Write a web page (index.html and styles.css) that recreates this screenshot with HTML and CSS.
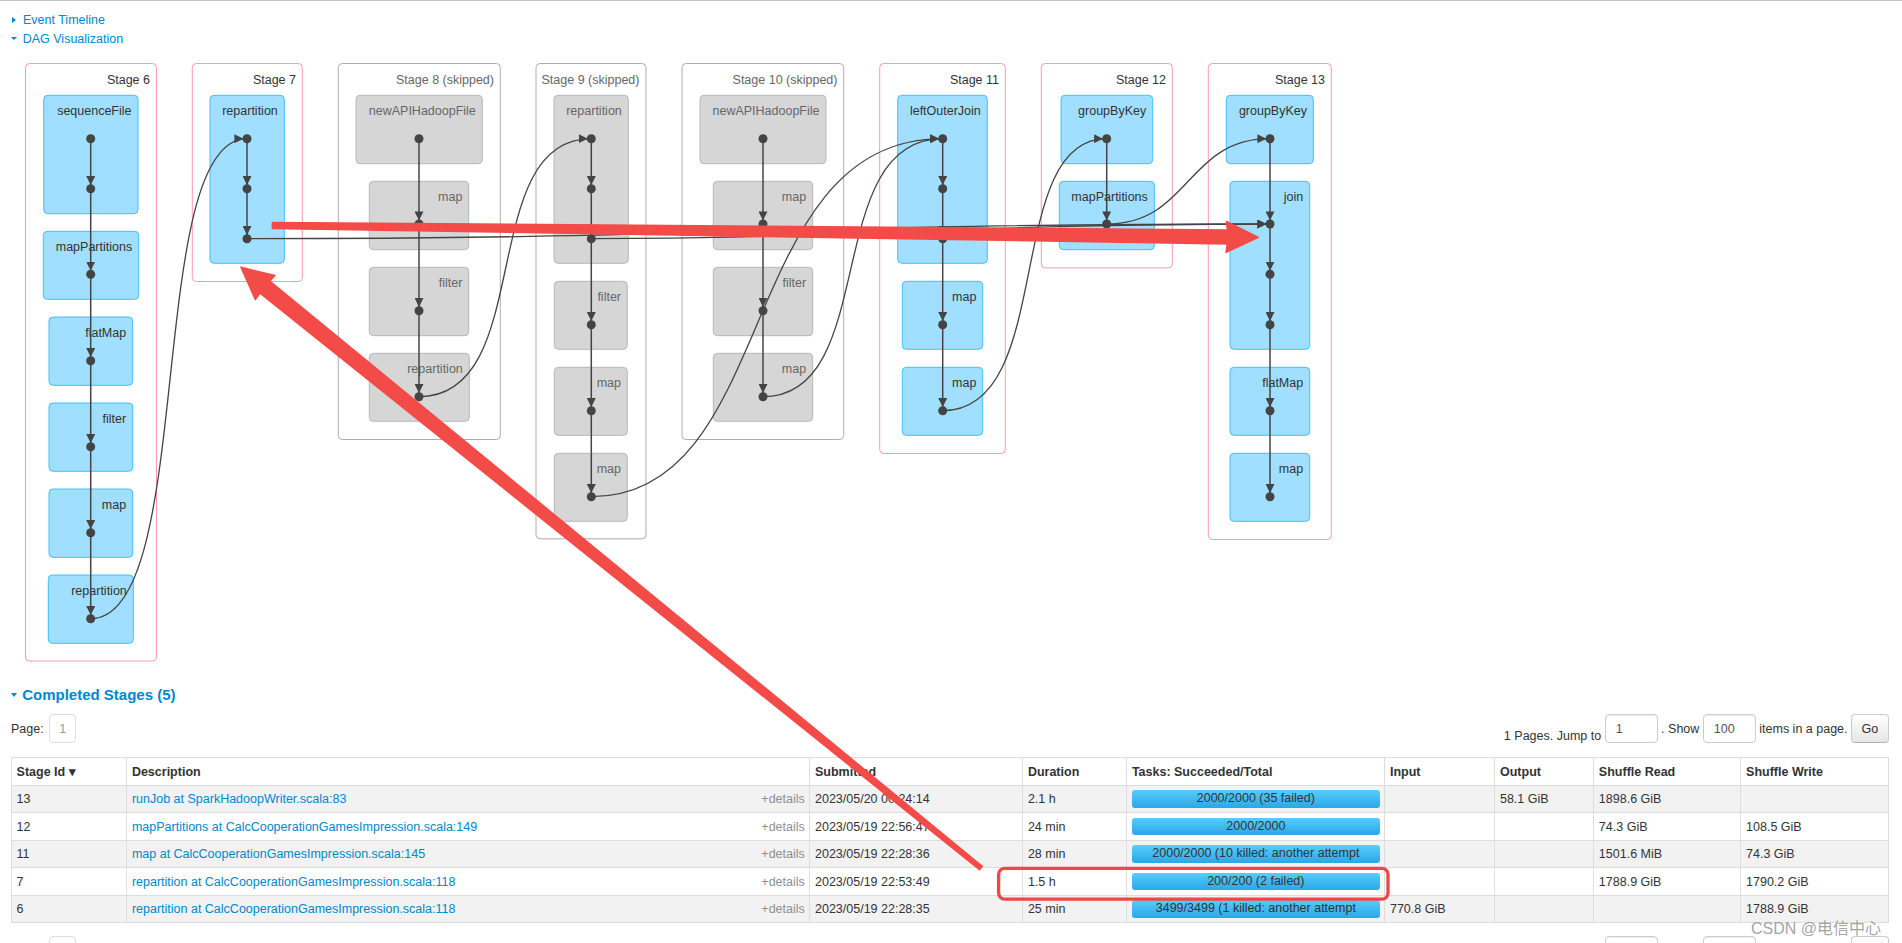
FILE: index.html
```html
<!DOCTYPE html>
<html lang="en">

<head>
    <meta charset="UTF-8">
    <title>Spark Jobs - Job Details</title>
    <link rel="stylesheet" href="styles.css">
</head>

<body>
    <div class="top-rule"></div>

    <!-- Collapsible sections -->
    <div class="toggles">
        <div class="toggle"><span class="arrow-closed"></span>Event Timeline</div>
        <div class="toggle"><span class="arrow-open"></span>DAG Visualization</div>
    </div>

    <!-- DAG -->
    <svg class="dag" width="1902" height="630" viewBox="0 50 1902 630">
        <defs>
            <marker id="arrow" viewBox="0 0 10 10" refX="14" refY="5" markerWidth="9" markerHeight="9"
                markerUnits="userSpaceOnUse" orient="auto">
                <path d="M0 0 L10 5 L0 10 Z"></path>
            </marker>
        </defs>

        <g class="stage">
            <rect x="25.5" y="63.5" width="131" height="597.5" rx="4"></rect>
            <text x="150" y="83.8">Stage 6</text>
            <g class="op"><rect x="43.7" y="95.3" width="94.3" height="118.4" rx="4"></rect><text x="131.5" y="115.3">sequenceFile</text></g>
            <g class="op"><rect x="43.3" y="231.3" width="95.4" height="68" rx="4"></rect><text x="132.2" y="251.3">mapPartitions</text></g>
            <g class="op"><rect x="49" y="317" width="83.7" height="68.3" rx="4"></rect><text x="126.2" y="337">flatMap</text></g>
            <g class="op"><rect x="49" y="403" width="83.7" height="68.3" rx="4"></rect><text x="126.2" y="423">filter</text></g>
            <g class="op"><rect x="49" y="489" width="83.7" height="68.3" rx="4"></rect><text x="126.2" y="509">map</text></g>
            <g class="op"><rect x="48.3" y="575" width="85" height="68.3" rx="4"></rect><text x="126.8" y="595">repartition</text></g>
        </g>

        <g class="stage">
            <rect x="192.3" y="63.5" width="110" height="218" rx="4"></rect>
            <text x="296" y="83.8">Stage 7</text>
            <g class="op"><rect x="210" y="95.3" width="74.3" height="168" rx="4"></rect><text x="277.8" y="115.3">repartition</text></g>
        </g>

        <g class="stage skipped">
            <rect x="338.3" y="63.5" width="162" height="376" rx="4"></rect>
            <text x="494" y="83.8">Stage 8 (skipped)</text>
            <g class="op"><rect x="356" y="95.3" width="126.3" height="68.4" rx="4"></rect><text x="475.8" y="115.3">newAPIHadoopFile</text></g>
            <g class="op"><rect x="369.3" y="181.3" width="99.4" height="68.4" rx="4"></rect><text x="462.4" y="201.3">map</text></g>
            <g class="op"><rect x="369.3" y="267.3" width="99.4" height="68.4" rx="4"></rect><text x="462.4" y="287.3">filter</text></g>
            <g class="op"><rect x="369.3" y="353.3" width="100" height="68" rx="4"></rect><text x="462.8" y="373.3">repartition</text></g>
        </g>

        <g class="stage skipped">
            <rect x="536" y="63.5" width="110" height="475.3" rx="4"></rect>
            <text x="639.5" y="83.8">Stage 9 (skipped)</text>
            <g class="op"><rect x="554" y="95.3" width="74.3" height="168" rx="4"></rect><text x="621.8" y="115.3">repartition</text></g>
            <g class="op"><rect x="554.3" y="281.3" width="73" height="68" rx="4"></rect><text x="621" y="301.3">filter</text></g>
            <g class="op"><rect x="554.3" y="367.3" width="73" height="68" rx="4"></rect><text x="621" y="387.3">map</text></g>
            <g class="op"><rect x="554.3" y="453.3" width="73" height="68" rx="4"></rect><text x="621" y="473.3">map</text></g>
        </g>

        <g class="stage skipped">
            <rect x="682" y="63.5" width="161.7" height="376" rx="4"></rect>
            <text x="837.5" y="83.8">Stage 10 (skipped)</text>
            <g class="op"><rect x="700" y="95.3" width="126" height="68.4" rx="4"></rect><text x="819.5" y="115.3">newAPIHadoopFile</text></g>
            <g class="op"><rect x="713.3" y="181.3" width="99.4" height="68.4" rx="4"></rect><text x="806.2" y="201.3">map</text></g>
            <g class="op"><rect x="713.3" y="267.3" width="99.4" height="68.4" rx="4"></rect><text x="806.2" y="287.3">filter</text></g>
            <g class="op"><rect x="713.3" y="353.3" width="99.4" height="68" rx="4"></rect><text x="806.2" y="373.3">map</text></g>
        </g>

        <g class="stage">
            <rect x="879.7" y="63.5" width="125.6" height="390" rx="4"></rect>
            <text x="999" y="83.8">Stage 11</text>
            <g class="op"><rect x="897.7" y="95.3" width="89.6" height="168" rx="4"></rect><text x="980.8" y="115.3">leftOuterJoin</text></g>
            <g class="op"><rect x="902.3" y="281.3" width="80.4" height="68" rx="4"></rect><text x="976.4" y="301.3">map</text></g>
            <g class="op"><rect x="902.3" y="367.3" width="80.4" height="68" rx="4"></rect><text x="976.4" y="387.3">map</text></g>
        </g>

        <g class="stage">
            <rect x="1041.3" y="63.5" width="131" height="204.4" rx="4"></rect>
            <text x="1166" y="83.8">Stage 12</text>
            <g class="op"><rect x="1061" y="95.3" width="91.7" height="68.4" rx="4"></rect><text x="1146.2" y="115.3">groupByKey</text></g>
            <g class="op"><rect x="1059.3" y="181.3" width="95" height="68.4" rx="4"></rect><text x="1147.8" y="201.3">mapPartitions</text></g>
        </g>

        <g class="stage">
            <rect x="1208.3" y="63.5" width="123" height="476" rx="4"></rect>
            <text x="1325" y="83.8">Stage 13</text>
            <g class="op"><rect x="1226.3" y="95.3" width="87" height="68.4" rx="4"></rect><text x="1307" y="115.3">groupByKey</text></g>
            <g class="op"><rect x="1230" y="181.3" width="79.7" height="168" rx="4"></rect><text x="1303.2" y="201.3">join</text></g>
            <g class="op"><rect x="1230" y="367.3" width="79.7" height="68" rx="4"></rect><text x="1303.2" y="387.3">flatMap</text></g>
            <g class="op"><rect x="1230" y="453.3" width="79.7" height="68" rx="4"></rect><text x="1303.2" y="473.3">map</text></g>
        </g>

        <!-- edges inside stages -->
        <g class="edges">
            <path d="M90.7 138.7 V188.7 V274.3 V360.7 V446.7 V532.7 V618.7"></path>
            <path d="M247 138.7 V188.7 V238.7"></path>
            <path d="M419 138.7 V224 V310.7 V396.7"></path>
            <path d="M591.3 138.7 V188.7 V238.7 V324.7 V410.7 V496.7"></path>
            <path d="M763 138.7 V224 V310.7 V396.7"></path>
            <path d="M942.7 138.7 V188.7 V238.7 V324.7 V410.7"></path>
            <path d="M1106.7 138.7 V224"></path>
            <path d="M1270 138.7 V224 V274.3 V324.7 V410.7 V496.7"></path>
        </g>

        <!-- edges across stages -->
        <g class="edges cross">
            <path d="M90.7 618.7 C197 618.7 144 138.7 247 138.7"></path>
            <path d="M419 396.7 C537 396.7 475 138.7 591.3 138.7"></path>
            <path d="M591.3 496.7 C780 496.7 735 138.7 942.7 138.7"></path>
            <path d="M763 396.7 C881 396.7 820 138.7 942.7 138.7"></path>
            <path d="M942.7 410.7 C1057 410.7 1002 138.7 1106.7 138.7"></path>
            <path d="M1106.7 224 C1190 224 1186 138.7 1270 138.7"></path>
            <path d="M247 238.7 C700 238.7 800 224 1270 224"></path>
            <path d="M591.3 238.7 C850 238.7 950 224.5 1270 224"></path>
        </g>

        <g class="dots">
            <circle cx="90.7" cy="138.7" r="4.5"></circle>
            <circle cx="90.7" cy="188.7" r="4.5"></circle>
            <circle cx="90.7" cy="274.3" r="4.5"></circle>
            <circle cx="90.7" cy="360.7" r="4.5"></circle>
            <circle cx="90.7" cy="446.7" r="4.5"></circle>
            <circle cx="90.7" cy="532.7" r="4.5"></circle>
            <circle cx="90.7" cy="618.7" r="4.5"></circle>
            <circle cx="247" cy="138.7" r="4.5"></circle>
            <circle cx="247" cy="188.7" r="4.5"></circle>
            <circle cx="247" cy="238.7" r="4.5"></circle>
            <circle cx="419" cy="138.7" r="4.5"></circle>
            <circle cx="419" cy="224" r="4.5"></circle>
            <circle cx="419" cy="310.7" r="4.5"></circle>
            <circle cx="419" cy="396.7" r="4.5"></circle>
            <circle cx="591.3" cy="138.7" r="4.5"></circle>
            <circle cx="591.3" cy="188.7" r="4.5"></circle>
            <circle cx="591.3" cy="238.7" r="4.5"></circle>
            <circle cx="591.3" cy="324.7" r="4.5"></circle>
            <circle cx="591.3" cy="410.7" r="4.5"></circle>
            <circle cx="591.3" cy="496.7" r="4.5"></circle>
            <circle cx="763" cy="138.7" r="4.5"></circle>
            <circle cx="763" cy="224" r="4.5"></circle>
            <circle cx="763" cy="310.7" r="4.5"></circle>
            <circle cx="763" cy="396.7" r="4.5"></circle>
            <circle cx="942.7" cy="138.7" r="4.5"></circle>
            <circle cx="942.7" cy="188.7" r="4.5"></circle>
            <circle cx="942.7" cy="238.7" r="4.5"></circle>
            <circle cx="942.7" cy="324.7" r="4.5"></circle>
            <circle cx="942.7" cy="410.7" r="4.5"></circle>
            <circle cx="1106.7" cy="138.7" r="4.5"></circle>
            <circle cx="1106.7" cy="224" r="4.5"></circle>
            <circle cx="1270" cy="138.7" r="4.5"></circle>
            <circle cx="1270" cy="224" r="4.5"></circle>
            <circle cx="1270" cy="274.3" r="4.5"></circle>
            <circle cx="1270" cy="324.7" r="4.5"></circle>
            <circle cx="1270" cy="410.7" r="4.5"></circle>
            <circle cx="1270" cy="496.7" r="4.5"></circle>
        </g>
    </svg>

    <div class="content">
        <h4 class="section-title"><span class="arrow-open big"></span>Completed Stages (5)</h4>

        <div class="pager">
            <div class="pager-left">Page: <span class="page-box">1</span></div>
            <div class="pager-right">
                1 Pages. Jump to <input class="pager-input" type="text" value="1"> . Show <input class="pager-input"
                    type="text" value="100"> items in a page. <button class="go-btn">Go</button>
            </div>
        </div>

        <table class="stage-table">
            <colgroup>
                <col class="c-id">
                <col class="c-desc">
                <col class="c-sub">
                <col class="c-dur">
                <col class="c-tasks">
                <col class="c-in">
                <col class="c-out">
                <col class="c-sr">
                <col class="c-sw">
            </colgroup>
            <thead>
                <tr>
                    <th>Stage Id ▾</th>
                    <th>Description</th>
                    <th>Submitted</th>
                    <th>Duration</th>
                    <th>Tasks: Succeeded/Total</th>
                    <th>Input</th>
                    <th>Output</th>
                    <th>Shuffle Read</th>
                    <th>Shuffle Write</th>
                </tr>
            </thead>
            <tbody>
                <tr>
                    <td>13</td>
                    <td><div class="desc"><a href="#">runJob at SparkHadoopWriter.scala:83</a><span class="details">+details</span></div></td>
                    <td>2023/05/20 00:24:14</td>
                    <td>2.1 h</td>
                    <td><div class="progress">2000/2000 (35 failed)</div></td>
                    <td></td>
                    <td>58.1 GiB</td>
                    <td>1898.6 GiB</td>
                    <td></td>
                </tr>
                <tr>
                    <td>12</td>
                    <td><div class="desc"><a href="#">mapPartitions at CalcCooperationGamesImpression.scala:149</a><span class="details">+details</span></div></td>
                    <td>2023/05/19 22:56:47</td>
                    <td>24 min</td>
                    <td><div class="progress">2000/2000</div></td>
                    <td></td>
                    <td></td>
                    <td>74.3 GiB</td>
                    <td>108.5 GiB</td>
                </tr>
                <tr>
                    <td>11</td>
                    <td><div class="desc"><a href="#">map at CalcCooperationGamesImpression.scala:145</a><span class="details">+details</span></div></td>
                    <td>2023/05/19 22:28:36</td>
                    <td>28 min</td>
                    <td><div class="progress">2000/2000 (10 killed: another attempt succeeded)</div></td>
                    <td></td>
                    <td></td>
                    <td>1501.6 MiB</td>
                    <td>74.3 GiB</td>
                </tr>
                <tr>
                    <td>7</td>
                    <td><div class="desc"><a href="#">repartition at CalcCooperationGamesImpression.scala:118</a><span class="details">+details</span></div></td>
                    <td>2023/05/19 22:53:49</td>
                    <td>1.5 h</td>
                    <td><div class="progress">200/200 (2 failed)</div></td>
                    <td></td>
                    <td></td>
                    <td>1788.9 GiB</td>
                    <td>1790.2 GiB</td>
                </tr>
                <tr>
                    <td>6</td>
                    <td><div class="desc"><a href="#">repartition at CalcCooperationGamesImpression.scala:118</a><span class="details">+details</span></div></td>
                    <td>2023/05/19 22:28:35</td>
                    <td>25 min</td>
                    <td><div class="progress">3499/3499 (1 killed: another attempt succeeded)</div></td>
                    <td>770.8 GiB</td>
                    <td></td>
                    <td></td>
                    <td>1788.9 GiB</td>
                </tr>
            </tbody>
        </table>

        <div class="pager pager-bottom">
            <div class="pager-left">Page: <span class="page-box">1</span></div>
            <div class="pager-right">
                1 Pages. Jump to <input class="pager-input" type="text" value="1"> . Show <input class="pager-input"
                    type="text" value="100"> items in a page. <button class="go-btn">Go</button>
            </div>
        </div>
    </div>

    <!-- Annotations drawn over the screenshot -->
    <svg class="annotations" width="1902" height="943" viewBox="0 0 1902 943">
        <g transform="translate(1258.3 237.3) rotate(180.685)">
            <path d="M0 0 L32 -15.5 L31 -7 L986 -3 L986 3 L31 7 L32 15.5 Z"></path>
        </g>
        <g transform="translate(241 267.3) rotate(39.07)">
            <path d="M0 0 L31.5 -15 L31 -7.5 L953 -2.2 L953 2.2 L31 8 L31.5 16 Z"></path>
        </g>
        <rect class="mark-box" x="998.6" y="868.3" width="389.4" height="30.8" rx="6"></rect>
    </svg>

    <div class="watermark">CSDN @电信中心</div>
</body>

</html>
```

FILE: styles.css
```css
* {
    box-sizing: border-box;
}

html,
body {
    margin: 0;
    padding: 0;
    overflow: hidden;
}

body {
    font-family: "Liberation Sans", Arial, sans-serif;
    font-size: 12.5px;
    color: #333;
    background: #fff;
    position: relative;
    width: 1902px;
    height: 943px;
}

a {
    color: #0088cc;
    text-decoration: none;
}

.top-rule {
    height: 1px;
    background: #c6c6c6;
}

/* Toggle links */
.toggles {
    padding: 10px 0 0 11px;
    margin-bottom: 2px;
}

.toggle {
    height: 18.5px;
    line-height: 18.5px;
    color: #0088cc;
    display: flex;
    align-items: center;
}

.arrow-closed {
    display: inline-block;
    width: 0;
    height: 0;
    border-top: 3.5px solid transparent;
    border-bottom: 3.5px solid transparent;
    border-left: 4px solid #0088cc;
    margin: 0 6.7px 0 1.3px;
}

.arrow-open {
    display: inline-block;
    width: 0;
    height: 0;
    border-left: 3px solid transparent;
    border-right: 3px solid transparent;
    border-top: 3.5px solid #0088cc;
    margin: 0 5.4px 0 0.3px;
}

.arrow-open.big {
    border-left-width: 3.5px;
    border-right-width: 3.5px;
    border-top-width: 4px;
    margin: 0 5.2px 0 0;
}

/* DAG */
.dag {
    display: block;
}

.dag .stage > rect {
    fill: #fff;
    stroke: #ff99ac;
    stroke-width: 1px;
}

.dag .stage.skipped > rect {
    stroke: #adadad;
}

.dag text {
    font-family: "Liberation Sans", Arial, sans-serif;
    font-size: 12.5px;
    text-anchor: end;
    fill: #333;
}

.dag .skipped text {
    fill: #666;
}

.dag .op rect {
    fill: #a0dfff;
    stroke: #3ec0ff;
    stroke-width: 1px;
}

.dag .skipped .op rect {
    fill: #d6d6d6;
    stroke: #b7b7b7;
}

.dag .edges path {
    fill: none;
    stroke: #444;
    stroke-width: 1.5px;
    marker-mid: url(#arrow);
    marker-end: url(#arrow);
}

.dag .edges.cross path {
    stroke-width: 1.3px;
    marker-mid: none;
}

.dag marker path,
.dag .dots circle {
    fill: #444;
}

/* Stages table */
.content {
    margin-left: 11px;
    width: 1877.5px;
}

.section-title {
    margin: 5px 0 0;
    height: 20px;
    line-height: 20px;
    font-size: 15px;
    font-weight: bold;
    color: #0088cc;
    display: flex;
    align-items: center;
}

.pager {
    display: flex;
    justify-content: space-between;
    align-items: center;
    height: 29px;
    margin-top: 9.3px;
}

.pager-bottom {
    margin-top: 12.5px;
}

.pager-left,
.pager-right {
    display: flex;
    align-items: center;
    white-space: pre;
}

.page-box {
    display: inline-flex;
    justify-content: center;
    align-items: center;
    width: 27px;
    height: 29px;
    margin-left: 2px;
    border: 1px solid #ddd;
    border-radius: 4px;
    color: #999;
}

.pager-input {
    width: 53px;
    height: 29px;
    margin: 0;
    padding: 0 0 0 10px;
    border: 1px solid #ccc;
    border-radius: 4px;
    box-shadow: inset 0 1px 1px rgba(0, 0, 0, 0.075);
    font-family: inherit;
    font-size: 12.5px;
    color: #555;
}

.go-btn {
    width: 37.5px;
    height: 29px;
    padding: 0;
    border: 1px solid #ccc;
    border-bottom-color: #b3b3b3;
    border-radius: 4px;
    background: linear-gradient(to bottom, #ffffff, #e6e6e6);
    font-family: inherit;
    font-size: 12.5px;
    color: #333;
}

.stage-table {
    border-collapse: collapse;
    table-layout: fixed;
    width: 1877px;
    margin-top: 14px;
}

.c-id { width: 115.3px; }
.c-desc { width: 683.1px; }
.c-sub { width: 212.9px; }
.c-dur { width: 104px; }
.c-tasks { width: 258.1px; }
.c-in { width: 110px; }
.c-out { width: 98.9px; }
.c-sr { width: 147.2px; }
.c-sw { width: 147.5px; }

.stage-table th,
.stage-table td {
    border: 1px solid #ddd;
    height: 27.5px;
    padding: 0 4.6px;
    text-align: left;
    vertical-align: middle;
    white-space: nowrap;
    overflow: hidden;
}

.stage-table th {
    font-weight: bold;
    background: #fff;
}

.stage-table tbody tr:nth-child(odd) {
    background: #f2f2f2;
}

.desc {
    display: flex;
    justify-content: space-between;
}

.details {
    color: #8f8f8f;
}

.progress {
    height: 17.5px;
    line-height: 17.5px;
    border-radius: 3px;
    background: linear-gradient(to bottom, #56cdfc, #2ba7e7);
    text-align: center;
    white-space: normal;
    overflow: hidden;
    color: #333;
}

/* Annotation overlay */
.annotations {
    position: absolute;
    top: 0;
    left: 0;
    pointer-events: none;
}

.annotations path {
    fill: #f34b48;
    stroke: #f34b48;
    stroke-width: 1.5px;
    stroke-linejoin: round;
}

.annotations .mark-box {
    fill: none;
    stroke: #f04646;
    stroke-width: 3.3px;
}

.watermark {
    position: absolute;
    left: 1751px;
    top: 915px;
    font-family: "Liberation Sans", "Noto Sans CJK SC", sans-serif;
    font-size: 16px;
    color: rgba(140, 140, 140, 0.8);
    white-space: nowrap;
}
```
